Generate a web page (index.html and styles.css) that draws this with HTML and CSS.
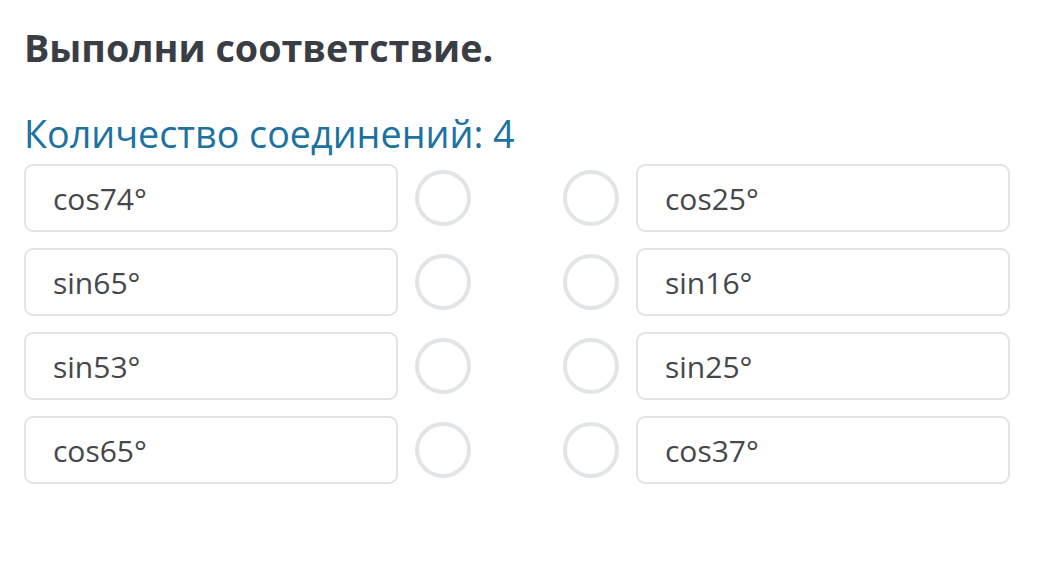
FILE: index.html
```html
<!DOCTYPE html>
<html lang="ru">
<head>
<meta charset="utf-8">
<link rel="stylesheet" href="styles.css">
</head>
<body>
<div class="page">
  <h1 class="title">Выполни соответствие.</h1>
  <div class="count">Количество соединений: 4</div>
  <div class="grid">
    <div class="item">cos74°</div><div class="dot"></div><div></div><div class="dot"></div><div class="item">cos25°</div>
    <div class="item">sin65°</div><div class="dot"></div><div></div><div class="dot"></div><div class="item">sin16°</div>
    <div class="item">sin53°</div><div class="dot"></div><div></div><div class="dot"></div><div class="item">sin25°</div>
    <div class="item">cos65°</div><div class="dot"></div><div></div><div class="dot"></div><div class="item">cos37°</div>
  </div>
</div>
</body>
</html>
```
FILE: styles.css
```css
html, body {
  margin: 0;
  padding: 0;
  background: #ffffff;
}
.page {
  font-family: "Open Sans", "Noto Sans", sans-serif;
  padding: 0 0 0 24px;
  width: 986px;
}
.title {
  margin: 0;
  padding-top: 22px;
  font-size: 37.7px;
  line-height: 52px;
  font-weight: 700;
  color: #3a3e44;
}
.count {
  margin-top: 40px;
  font-size: 37.7px;
  line-height: 40px;
  color: #1c72a0;
}
.grid {
  margin-top: 10px;
  display: grid;
  grid-template-columns: 374px 56px 1fr 56px 374px;
  column-gap: 17px;
  row-gap: 16px;
  align-items: center;
}
.item {
  box-sizing: border-box;
  height: 68px;
  border: 2px solid #e3e3e3;
  border-radius: 9px;
  padding-left: 27px;
  display: flex;
  align-items: center;
  font-size: 30px;
  color: #45474b;
}
.dot {
  box-sizing: border-box;
  width: 56px;
  height: 56px;
  border: 4px solid #e2e5e8;
  border-radius: 50%;
}
```
